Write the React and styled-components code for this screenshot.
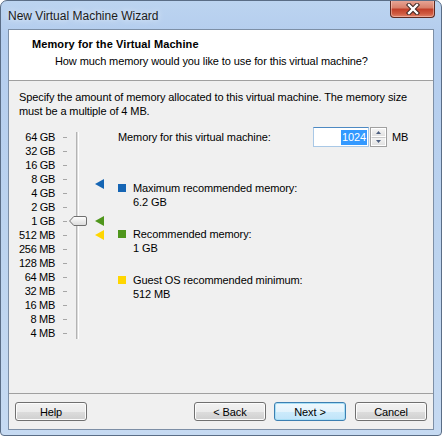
import React from "react";
import styled, { createGlobalStyle } from "styled-components";

const GlobalStyle = createGlobalStyle`
  html, body {
    margin: 0;
    padding: 0;
    background: #ffffff;
  }
  body {
    font-family: "Liberation Sans", Arial, sans-serif;
    font-size: 11px;
    letter-spacing: -0.1px;
    color: #000;
  }
`;

const ROW = 14;

const scale = [
  "64 GB", "32 GB", "16 GB", "8 GB", "4 GB", "2 GB", "1 GB",
  "512 MB", "256 MB", "128 MB", "64 MB", "32 MB", "16 MB", "8 MB", "4 MB",
];

// index on the scale for an amount in MB (64 GB at 0, 4 MB at 14)
const rowFor = (mb) => 14 - Math.log2(mb / 4);

const markers = [
  { mb: 6.2 * 1024, color: "#1565b4", label: "Maximum recommended memory:", value: "6.2 GB" },
  { mb: 1024, color: "#4f961c", label: "Recommended memory:", value: "1 GB" },
  { mb: 512, color: "#ffd600", label: "Guest OS recommended minimum:", value: "512 MB" },
];

const Window = styled.div`
  width: 442px;
  height: 436px;
  box-sizing: border-box;
  display: flex;
  flex-direction: column;
  padding: 0 7px 5px 7px;
  border: 1px solid #5a6d86;
  border-radius: 7px 7px 4px 4px;
  background: linear-gradient(to bottom, #bcd4f0 0%, #b4cdee 8%, #bdd4ef 60%, #c6daf2 100%);
  overflow: hidden;
`;

const TitleBar = styled.div`
  height: 28px;
  display: flex;
  align-items: flex-start;
  justify-content: space-between;
`;

const Caption = styled.div`
  margin-top: 8px;
  font-size: 12px;
  letter-spacing: 0;
  color: #1b1b1b;
  text-shadow: 0 0 6px rgba(255, 255, 255, 0.9);
`;

const CloseButton = styled.div`
  width: 45px;
  height: 18px;
  margin-top: -1px;
  margin-right: -1px;
  box-sizing: border-box;
  border: 1px solid #5e2a22;
  border-top: none;
  border-radius: 0 0 4px 4px;
  background: linear-gradient(to bottom, #e9a99a 0%, #d9806b 45%, #c2402a 55%, #cf5a40 80%, #e0826a 100%);
  box-shadow: inset 0 0 0 1px rgba(255, 220, 210, 0.45);
  display: flex;
  align-items: center;
  justify-content: center;
`;

const Client = styled.div`
  flex: 1;
  display: flex;
  flex-direction: column;
  border: 1px solid #7d8fa6;
  background: #f0f0f0;
`;

const Header = styled.div`
  height: 51px;
  box-sizing: border-box;
  padding: 7px 0 0 23px;
  background: #ffffff;
  border-bottom: 1px solid #a0a0a0;
  line-height: 14px;
`;

const HeaderTitle = styled.div`
  font-weight: bold;
  letter-spacing: 0.1px;
`;

const HeaderSub = styled.div`
  margin: 3px 0 0 23px;
`;

const Body = styled.div`
  flex: 1;
  padding: 9px 10px 0 10px;
  line-height: 14px;
`;

const Description = styled.div`
  width: 400px;
`;

const Main = styled.div`
  margin-top: 9px;
  display: flex;
  align-items: flex-start;
`;

const Slider = styled.div`
  display: flex;
  padding-top: 3px;
`;

const Labels = styled.div`
  width: 36px;
  display: flex;
  flex-direction: column;
  text-align: right;
  white-space: nowrap;
  letter-spacing: -0.3px;
`;

const Label = styled.div`
  height: ${ROW}px;
  line-height: ${ROW}px;
`;

const Ticks = styled.div`
  width: 4px;
  margin-left: 8px;
  display: flex;
  flex-direction: column;
`;

const Tick = styled.div`
  height: ${ROW}px;
  display: flex;
  align-items: center;

  &::before {
    content: "";
    width: 4px;
    height: 1px;
    background: #a6a6a6;
  }
`;

const TrackColumn = styled.div`
  position: relative;
  width: 20px;
  display: flex;
  justify-content: center;
`;

const Track = styled.div`
  width: 3px;
  margin: 2px 0 1px 0;
  box-sizing: border-box;
  border-left: 1px solid #b3b3b3;
  border-right: 1px solid #ffffff;
  background: #dcdcdc;
`;

const Thumb = styled.svg`
  position: absolute;
  left: 2px;
`;

const MarkerColumn = styled.div`
  position: relative;
  width: 31px;
`;

const Marker = styled.svg`
  position: absolute;
  left: 8px;
`;

const Right = styled.div`
  display: flex;
  flex-direction: column;
`;

const MemoryRow = styled.div`
  height: 20px;
  display: flex;
  align-items: center;
`;

const MemoryLabel = styled.div`
  width: 195px;
`;

const SpinInput = styled.div`
  width: 56px;
  height: 20px;
  box-sizing: border-box;
  border: 1px solid #a9c8e6;
  border-top-color: #4d89c2;
  background: #ffffff;
  display: flex;
  align-items: center;
  justify-content: flex-end;
  padding-right: 1px;
`;

const Selected = styled.span`
  background: #3399ff;
  color: #ffffff;
  line-height: 15px;
  padding: 0 1px;
`;

const SpinButtons = styled.div`
  width: 17px;
  height: 20px;
  margin-left: 1px;
  box-sizing: border-box;
  border: 1px solid #a0a0a0;
  display: flex;
  flex-direction: column;
`;

const SpinButton = styled.div`
  flex: 1;
  display: flex;
  align-items: center;
  justify-content: center;
  background: linear-gradient(to bottom, #f4f4f4, #e2e2e2);
  border: 1px solid #ffffff;
  ${(p) => (p.$down ? "border-top-color: #c8c8c8;" : "")}
`;

const Unit = styled.div`
  margin-left: 5px;
`;

const Legend = styled.div`
  margin-top: 34px;
  display: flex;
  flex-direction: column;
  gap: 18px;
`;

const LegendItem = styled.div`
  display: flex;
  align-items: flex-start;
`;

const Swatch = styled.div`
  width: 8px;
  height: 8px;
  margin: 3px 7px 0 0;
  background: ${(p) => p.$color};
`;

const Footer = styled.div`
  border-top: 1px solid #a0a0a0;
  padding: 8px 6px 8px 6px;
  display: flex;
  align-items: center;
`;

const Button = styled.div`
  width: 72px;
  height: 19px;
  box-sizing: border-box;
  margin-left: ${(p) => p.$gap || 0}px;
  border: 1px solid ${(p) => (p.$default ? "#3c7fb1" : "#707070")};
  border-radius: 3px;
  display: flex;
  align-items: center;
  justify-content: center;
  background: ${(p) =>
    p.$default
      ? "linear-gradient(to bottom, #f0f8fd 0%, #e3f3fc 50%, #cdebfb 51%, #c0e4f9 100%)"
      : "linear-gradient(to bottom, #f2f2f2 0%, #ebebeb 50%, #dddddd 51%, #cfcfcf 100%)"};
  box-shadow: inset 0 0 0 1px ${(p) => (p.$default ? "#a8dff6" : "#fcfcfc")};
  color: #000;
`;

const Spacer = styled.div`
  flex: 1;
`;

export default function App() {
  const current = rowFor(1024);

  return (
    <>
      <GlobalStyle />
      <Window>
        <TitleBar>
          <Caption>New Virtual Machine Wizard</Caption>
          <CloseButton>
            <svg width="14" height="12" viewBox="0 0 14 12">
              <path
                d="M3 2 L11 10 M11 2 L3 10"
                stroke="#3b2320"
                strokeWidth="4.4"
                strokeLinecap="square"
              />
              <path
                d="M3 2 L11 10 M11 2 L3 10"
                stroke="#ffffff"
                strokeWidth="2.4"
                strokeLinecap="square"
              />
            </svg>
          </CloseButton>
        </TitleBar>

        <Client>
          <Header>
            <HeaderTitle>Memory for the Virtual Machine</HeaderTitle>
            <HeaderSub>How much memory would you like to use for this virtual machine?</HeaderSub>
          </Header>

          <Body>
            <Description>
              Specify the amount of memory allocated to this virtual machine. The memory size
              must be a multiple of 4 MB.
            </Description>

            <Main>
              <Slider>
                <Labels>
                  {scale.map((s) => (
                    <Label key={s}>{s}</Label>
                  ))}
                </Labels>
                <Ticks>
                  {scale.map((s) => (
                    <Tick key={s} />
                  ))}
                </Ticks>
                <TrackColumn>
                  <Track />
                  <Thumb
                    width="18"
                    height="10"
                    viewBox="0 0 18 10"
                    style={{ top: current * ROW + ROW / 2 - 5 }}
                  >
                    <defs>
                      <linearGradient id="thumbFill" x1="0" y1="0" x2="0" y2="1">
                        <stop offset="0" stopColor="#ffffff" />
                        <stop offset="1" stopColor="#dadada" />
                      </linearGradient>
                    </defs>
                    <path
                      d="M0.6 5 L4.8 0.5 H16 Q17.5 0.5 17.5 2 V8 Q17.5 9.5 16 9.5 H4.8 Z"
                      fill="url(#thumbFill)"
                      stroke="#6f6f6f"
                    />
                  </Thumb>
                </TrackColumn>
                <MarkerColumn>
                  {markers.map((m) => (
                    <Marker
                      key={m.label}
                      width="9"
                      height="10"
                      viewBox="0 0 9 10"
                      style={{ top: rowFor(m.mb) * ROW + ROW / 2 - 5 }}
                    >
                      <polygon points="0,5 9,0 9,10" fill={m.color} />
                    </Marker>
                  ))}
                </MarkerColumn>
              </Slider>

              <Right>
                <MemoryRow>
                  <MemoryLabel>Memory for this virtual machine:</MemoryLabel>
                  <SpinInput>
                    <Selected>1024</Selected>
                  </SpinInput>
                  <SpinButtons>
                    <SpinButton>
                      <svg width="5" height="3" viewBox="0 0 5 3">
                        <polygon points="2.5,0 5,3 0,3" fill="#4d5f80" />
                      </svg>
                    </SpinButton>
                    <SpinButton $down>
                      <svg width="5" height="3" viewBox="0 0 5 3">
                        <polygon points="0,0 5,0 2.5,3" fill="#4d5f80" />
                      </svg>
                    </SpinButton>
                  </SpinButtons>
                  <Unit>MB</Unit>
                </MemoryRow>

                <Legend>
                  {markers.map((m) => (
                    <LegendItem key={m.label}>
                      <Swatch $color={m.color} />
                      <div>
                        <div>{m.label}</div>
                        <div>{m.value}</div>
                      </div>
                    </LegendItem>
                  ))}
                </Legend>
              </Right>
            </Main>
          </Body>

          <Footer>
            <Button>Help</Button>
            <Spacer />
            <Button>&lt; Back</Button>
            <Button $gap={8} $default>
              Next &gt;
            </Button>
            <Button $gap={9}>Cancel</Button>
          </Footer>
        </Client>
      </Window>
    </>
  );
}
